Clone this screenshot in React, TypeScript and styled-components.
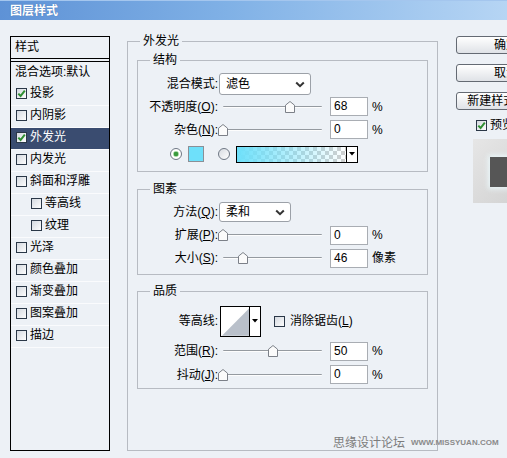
import React from 'react';
import styled, { createGlobalStyle } from 'styled-components';

const GlobalStyle = createGlobalStyle`
  html, body { margin: 0; padding: 0; background: #edf1f6; }
  body {
    font-family: "Liberation Sans", "Noto Sans CJK SC", sans-serif;
    font-size: 12px;
    color: #000;
  }
  * { box-sizing: border-box; }
`;

const Dialog = styled.div`
  position: relative;
  width: 507px;
  height: 458px;
  overflow: hidden;
  background: #edf1f6;
  line-height: 14px;
`;

const TitleBar = styled.div`
  height: 20px;
  padding-left: 10px;
  display: flex;
  align-items: center;
  background: linear-gradient(to right, #5e92d6 0%, #80b1e6 45%, #b6d5f4 100%);
  border-top: 1px solid #a4c6ee;
  color: #fff;
  font-weight: bold;
  text-shadow: 0 0 1px #3a68a6;
`;

const Body = styled.div`
  display: flex;
  align-items: flex-start;
  padding: 14px 0 0 10px;
`;

/* left style list */
const StyleList = styled.div`
  flex: 0 0 100px;
  height: 415px;
  margin-top: 2px;
  border: 1px solid #000;
  display: flex;
  flex-direction: column;
`;

const ListHeader = styled.div`
  height: 22px;
  padding: 0 0 1px 4px;
  display: flex;
  align-items: center;
  border-bottom: 1px solid #000;
`;

const BlendRow = styled.div`
  height: 23px;
  margin-top: 2px;
  border-top: 1px solid #000;
  padding: 0 0 3px 4px;
  display: flex;
  align-items: center;
  white-space: nowrap;
`;

const ListItem = styled.div<{ $active?: boolean; $indent?: boolean }>`
  height: 22px;
  display: flex;
  align-items: center;
  gap: 3px;
  padding: 0 0 3px ${p => (p.$indent ? 20 : 5)}px;
  border-bottom: 1px solid #fafbfd;
  background: ${p => (p.$active ? '#3a4c70' : 'transparent')};
  color: ${p => (p.$active ? '#fff' : '#000')};
  white-space: nowrap;
`;

const Box = styled.span`
  width: 11px;
  height: 11px;
  flex-shrink: 0;
  border: 1px solid #2a3747;
  background: linear-gradient(135deg, #d4d9e0, #fdfdfd);
  display: flex;
  align-items: center;
  justify-content: center;
`;

const Check = ({ checked }: { checked?: boolean }) => (
  <Box>
    {checked && (
      <svg width="9" height="9" viewBox="0 0 9 9">
        <path d="M1.3 4.6 L3.6 7 L7.8 1.6" fill="none" stroke="#2f8f32" strokeWidth="2" />
      </svg>
    )}
  </Box>
);

/* middle settings */
const OuterGroup = styled.fieldset`
  flex: 0 0 311px;
  height: 417px;
  margin: 0 0 0 17px;
  padding: 5px 0 0;
  border: 1px solid #b7bbc2;
  min-width: 0;
`;

const Inner = styled.div`
  padding: 0 9px;
  display: flex;
  flex-direction: column;
`;

const Group = styled.fieldset<{ $mt?: number; $pt: number; $pb: number }>`
  margin: ${p => p.$mt ?? 0}px 0 0;
  padding: ${p => p.$pt}px 0 ${p => p.$pb}px;
  border: 1px solid #b7bbc2;
  min-width: 0;
`;

const Legend = styled.legend`
  margin-left: 12px;
  padding: 0 3px;
  line-height: 14px;
`;

const Row = styled.div<{ $h: number; $pl?: number }>`
  height: ${p => p.$h}px;
  display: flex;
  align-items: center;
  padding-left: ${p => p.$pl ?? 0}px;
`;

const Label = styled.div`
  width: 80px;
  flex-shrink: 0;
  text-align: right;
  white-space: nowrap;
`;

const Select = styled.div<{ $w: number; $h: number }>`
  width: ${p => p.$w}px;
  height: ${p => p.$h}px;
  margin-left: 1px;
  padding: 0 5px 0 6px;
  border: 1px solid #9ca1a8;
  border-radius: 3px;
  background: #fff;
  display: flex;
  align-items: center;
  justify-content: space-between;
`;

const SliderBox = styled.div`
  position: relative;
  flex-shrink: 0;
  width: 107px;
  height: 12px;
  margin-left: 1px;
`;

const Track = styled.div`
  position: absolute;
  left: 4px;
  right: 4px;
  top: 5px;
  height: 2px;
  border-top: 1px solid #959aa0;
  border-bottom: 1px solid #fdfdfd;
  border-radius: 1px;
`;

const ThumbSvg = styled.svg`
  position: absolute;
  top: 0;
`;

const ValueBox = styled.div`
  width: 38px;
  height: 19px;
  margin-left: 4px;
  padding-left: 3px;
  border: 1px solid #a9adb3;
  background: #fff;
  line-height: 17px;
`;

const Unit = styled.span`
  margin-left: 4px;
`;

const Radio = styled.span<{ $on?: boolean; $ml?: number }>`
  width: 12px;
  height: 12px;
  flex-shrink: 0;
  margin-left: ${p => p.$ml ?? 0}px;
  border-radius: 50%;
  border: 1px solid #6e7784;
  background: ${p =>
    p.$on
      ? 'radial-gradient(circle, #3b9a3e 0 2px, #a7d9a5 2.5px, #fff 3.5px)'
      : 'linear-gradient(135deg, #d7dbe1, #fff)'};
`;

const Swatch = styled.span`
  width: 16px;
  height: 16px;
  margin-left: 6px;
  border: 1px solid #8b8f96;
  background: #6ee0fa;
`;

const GradientPicker = styled.div`
  width: 122px;
  height: 17px;
  margin-left: 6px;
  border: 1px solid #000;
  display: flex;
`;

const GradientFill = styled.div`
  flex: 1;
  background:
    linear-gradient(to right, #6ee0fa, rgba(110, 224, 250, 0)),
    repeating-conic-gradient(#cfcfcf 0 25%, #fff 0 50%) 0 0 / 8px 8px;
`;

const ArrowPart = styled.div`
  width: 11px;
  border-left: 1px solid #000;
  background: #fff;
  display: flex;
  align-items: center;
  justify-content: center;
`;

const ContourBox = styled.div`
  width: 41px;
  height: 31px;
  margin-left: 2px;
  border: 1px solid #000;
  background: #fff;
  display: flex;
`;

const Toggle = styled.label`
  display: flex;
  align-items: center;
  gap: 5px;
  margin-left: 13px;
  white-space: nowrap;
`;

/* right column */
const Side = styled.div`
  flex: 0 0 100px;
  margin: 2px 0 0 18px;
  display: flex;
  flex-direction: column;
`;

const Button = styled.div`
  height: 18px;
  margin-bottom: 10px;
  border: 1px solid #646a73;
  border-radius: 3px;
  background: linear-gradient(#ffffff, #dfe2e7);
  display: flex;
  align-items: center;
  justify-content: center;
  white-space: nowrap;
`;

const PreviewToggle = styled.label`
  display: flex;
  align-items: center;
  gap: 3px;
  padding-left: 20px;
  height: 12px;
  margin-top: -1px;
  white-space: nowrap;
`;

const PreviewBox = styled.div`
  width: 64px;
  height: 64px;
  margin: 8px 0 0 17px;
  padding: 18px 0 0 17px;
  background: linear-gradient(135deg, #e6e6e6, #cfcfcf);
`;

const PreviewSquare = styled.div`
  width: 32px;
  height: 30px;
  background: #565656;
  box-shadow: 0 0 5px 2px rgba(235, 248, 252, 0.9);
`;

const Watermark = styled.div`
  position: absolute;
  left: 333px;
  top: 436px;
  display: flex;
  align-items: center;
  gap: 6px;
  color: #7c7c7c;
  font-size: 12px;
  white-space: nowrap;
`;

const Url = styled.span`
  font-family: "Liberation Sans", sans-serif;
  font-size: 8px;
  font-weight: bold;
  color: #8a8a8a;
`;

const Chevron = () => (
  <svg width="10" height="7" viewBox="0 0 10 7">
    <polyline points="1.2,1.5 5,5.2 8.8,1.5" fill="none" stroke="#333" strokeWidth="2" />
  </svg>
);

const DownTri = () => (
  <svg width="6" height="4" viewBox="0 0 6 4">
    <polygon points="0,0 6,0 3,3.5" fill="#000" />
  </svg>
);

const Slider = ({ value }: { value: number }) => (
  <SliderBox>
    <Track />
    <ThumbSvg width="10" height="12" viewBox="0 0 10 12" style={{ left: 4 + value * 99 - 5 }}>
      <path d="M5 0.5 L9.5 4.2 V11.5 H0.5 V4.2 Z" fill="#fbfbfb" stroke="#7c8088" />
    </ThumbSvg>
  </SliderBox>
);

const SliderRow = ({
  h,
  label,
  hot,
  value,
  text,
  unit,
}: {
  h: number;
  label: string;
  hot: string;
  value: number;
  text: string;
  unit: string;
}) => (
  <Row $h={h}>
    <Label>
      {label}(<u>{hot}</u>):
    </Label>
    <Slider value={value} />
    <ValueBox>{text}</ValueBox>
    <Unit>{unit}</Unit>
  </Row>
);

const items: { name: string; checked?: boolean; active?: boolean; indent?: boolean }[] = [
  { name: '投影', checked: true },
  { name: '内阴影' },
  { name: '外发光', checked: true, active: true },
  { name: '内发光' },
  { name: '斜面和浮雕' },
  { name: '等高线', indent: true },
  { name: '纹理', indent: true },
  { name: '光泽' },
  { name: '颜色叠加' },
  { name: '渐变叠加' },
  { name: '图案叠加' },
  { name: '描边' },
];

export default function App() {
  return (
    <Dialog>
      <GlobalStyle />
      <TitleBar>图层样式</TitleBar>
      <Body>
        <StyleList>
          <ListHeader>样式</ListHeader>
          <BlendRow>混合选项:默认</BlendRow>
          {items.map(it => (
            <ListItem key={it.name} $active={it.active} $indent={it.indent}>
              <Check checked={it.checked} />
              {it.name}
            </ListItem>
          ))}
        </StyleList>

        <OuterGroup>
          <Legend>外发光</Legend>
          <Inner>
            <Group $pt={6} $pb={4}>
              <Legend>结构</Legend>
              <Row $h={22}>
                <Label>混合模式:</Label>
                <Select $w={92} $h={22}>
                  滤色
                  <Chevron />
                </Select>
              </Row>
              <SliderRow h={23} label="不透明度" hot="O" value={0.68} text="68" unit="%" />
              <SliderRow h={23} label="杂色" hot="N" value={0} text="0" unit="%" />
              <Row $h={26} $pl={32}>
                <Radio $on />
                <Swatch />
                <Radio $ml={14} />
                <GradientPicker>
                  <GradientFill />
                  <ArrowPart>
                    <DownTri />
                  </ArrowPart>
                </GradientPicker>
              </Row>
            </Group>

            <Group $mt={10} $pt={5} $pb={5}>
              <Legend>图素</Legend>
              <Row $h={22}>
                <Label>
                  方法(<u>Q</u>):
                </Label>
                <Select $w={72} $h={20}>
                  柔和
                  <Chevron />
                </Select>
              </Row>
              <SliderRow h={24} label="扩展" hot="P" value={0} text="0" unit="%" />
              <SliderRow h={22} label="大小" hot="S" value={0.2} text="46" unit="像素" />
            </Group>

            <Group $mt={9} $pt={7} $pb={4}>
              <Legend>品质</Legend>
              <Row $h={32}>
                <Label>等高线:</Label>
                <ContourBox>
                  <svg width="29" height="29" viewBox="0 0 29 29">
                    <polygon points="1,29 29,1 29,29" fill="#b9c0ca" />
                  </svg>
                  <ArrowPart>
                    <DownTri />
                  </ArrowPart>
                </ContourBox>
                <Toggle>
                  <Check />
                  <span>
                    消除锯齿(<u>L</u>)
                  </span>
                </Toggle>
              </Row>
              <SliderRow h={28} label="范围" hot="R" value={0.5} text="50" unit="%" />
              <SliderRow h={19} label="抖动" hot="J" value={0} text="0" unit="%" />
            </Group>
          </Inner>
        </OuterGroup>

        <Side>
          <Button>确定</Button>
          <Button>取消</Button>
          <Button>新建样式(W)...</Button>
          <PreviewToggle>
            <Check checked />
            <span>
              预览(<u>V</u>)
            </span>
          </PreviewToggle>
          <PreviewBox>
            <PreviewSquare />
          </PreviewBox>
        </Side>
      </Body>
      <Watermark>
        思缘设计论坛
        <Url>WWW.MISSYUAN.COM</Url>
      </Watermark>
    </Dialog>
  );
}
